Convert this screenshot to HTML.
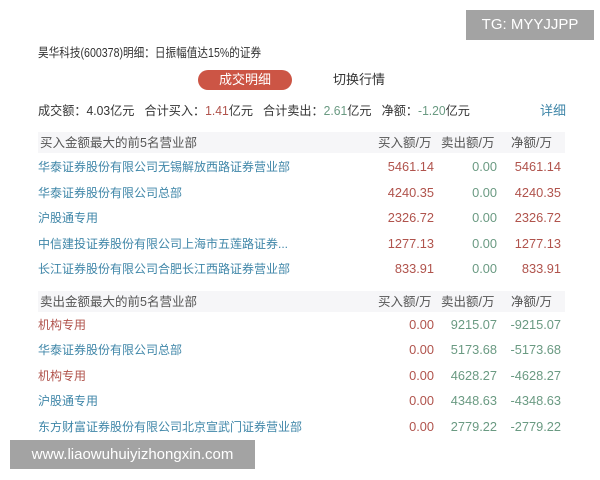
<!DOCTYPE html>
<html><head><meta charset="utf-8"><style>
*{margin:0;padding:0;box-sizing:border-box}
body{width:600px;height:480px;background:#fff;position:relative;overflow:hidden;font-family:"Liberation Sans","Noto Sans CJK SC",sans-serif;color:#333}
.a{position:absolute;white-space:nowrap;line-height:16px}
.r{color:#b0534c}.g{color:#6a9a82}.b{color:#3f86a8}
.hd{position:absolute;left:38px;width:527px;height:21px;background:#f6f6f8}
.n{position:absolute;text-align:right;white-space:nowrap;font-size:12.8px;line-height:16px}
.nm{font-size:12px;letter-spacing:0}
</style></head><body>
<div class="a" style="left:466px;top:10px;width:128px;height:30px;background:#a3a3a3;color:#fff;font-size:15px;line-height:30px;text-align:center">TG: MYYJJPP</div>
<div class="a" style="left:38px;top:45px;font-size:12.5px;transform:scaleX(0.85);transform-origin:0 0">昊华科技(600378)明细：日振幅值达15%的证券</div>
<div class="a" style="left:198px;top:70px;width:94px;height:20px;border-radius:10px;background:#cc5545;color:#fff;font-size:13px;line-height:20px;text-align:center">成交明细</div>
<div class="a" style="left:333px;top:72px;font-size:13px">切换行情</div>
<div class="a" style="left:38px;top:103px;font-size:12.5px;transform:scaleX(0.97);transform-origin:0 0">成交额：4.03亿元&nbsp;&nbsp;&nbsp;合计买入：<span class="r">1.41</span>亿元&nbsp;&nbsp;&nbsp;合计卖出：<span class="g">2.61</span>亿元&nbsp;&nbsp;&nbsp;净额：<span class="g">-1.20</span>亿元</div>
<div class="a b" style="left:540px;top:103px;font-size:13px">详细</div>

<div class="hd" style="top:132px"></div>
<div class="a" style="left:40px;top:135px;font-size:12.5px;color:#555">买入金额最大的前5名营业部</div>
<div class="a" style="left:378px;top:135px;font-size:12.5px;color:#555">买入额/万</div>
<div class="a" style="left:441px;top:135px;font-size:12.5px;color:#555">卖出额/万</div>
<div class="a" style="left:511px;top:135px;font-size:12.5px;color:#555">净额/万</div>

<div class="hd" style="top:291px"></div>
<div class="a" style="left:40px;top:294px;font-size:12.5px;color:#555">卖出金额最大的前5名营业部</div>
<div class="a" style="left:378px;top:294px;font-size:12.5px;color:#555">买入额/万</div>
<div class="a" style="left:441px;top:294px;font-size:12.5px;color:#555">卖出额/万</div>
<div class="a" style="left:511px;top:294px;font-size:12.5px;color:#555">净额/万</div>

<div class="a b nm" style="left:38px;top:159px">华泰证券股份有限公司无锡解放西路证券营业部</div>
<div class="a b nm" style="left:38px;top:185px">华泰证券股份有限公司总部</div>
<div class="a b nm" style="left:38px;top:210px">沪股通专用</div>
<div class="a b nm" style="left:38px;top:236px">中信建投证券股份有限公司上海市五莲路证券...</div>
<div class="a b nm" style="left:38px;top:261px">长江证券股份有限公司合肥长江西路证券营业部</div>

<div class="n r" style="right:166px;top:159px">5461.14</div><div class="n g" style="right:103px;top:159px">0.00</div><div class="n r" style="right:39px;top:159px">5461.14</div>
<div class="n r" style="right:166px;top:185px">4240.35</div><div class="n g" style="right:103px;top:185px">0.00</div><div class="n r" style="right:39px;top:185px">4240.35</div>
<div class="n r" style="right:166px;top:210px">2326.72</div><div class="n g" style="right:103px;top:210px">0.00</div><div class="n r" style="right:39px;top:210px">2326.72</div>
<div class="n r" style="right:166px;top:236px">1277.13</div><div class="n g" style="right:103px;top:236px">0.00</div><div class="n r" style="right:39px;top:236px">1277.13</div>
<div class="n r" style="right:166px;top:261px">833.91</div><div class="n g" style="right:103px;top:261px">0.00</div><div class="n r" style="right:39px;top:261px">833.91</div>

<div class="a r nm" style="left:38px;top:317px">机构专用</div>
<div class="a b nm" style="left:38px;top:342px">华泰证券股份有限公司总部</div>
<div class="a r nm" style="left:38px;top:368px">机构专用</div>
<div class="a b nm" style="left:38px;top:393px">沪股通专用</div>
<div class="a b nm" style="left:38px;top:419px">东方财富证券股份有限公司北京宣武门证券营业部</div>

<div class="n r" style="right:166px;top:317px">0.00</div><div class="n g" style="right:103px;top:317px">9215.07</div><div class="n g" style="right:39px;top:317px">-9215.07</div>
<div class="n r" style="right:166px;top:342px">0.00</div><div class="n g" style="right:103px;top:342px">5173.68</div><div class="n g" style="right:39px;top:342px">-5173.68</div>
<div class="n r" style="right:166px;top:368px">0.00</div><div class="n g" style="right:103px;top:368px">4628.27</div><div class="n g" style="right:39px;top:368px">-4628.27</div>
<div class="n r" style="right:166px;top:393px">0.00</div><div class="n g" style="right:103px;top:393px">4348.63</div><div class="n g" style="right:39px;top:393px">-4348.63</div>
<div class="n r" style="right:166px;top:419px">0.00</div><div class="n g" style="right:103px;top:419px">2779.22</div><div class="n g" style="right:39px;top:419px">-2779.22</div>

<div class="a" style="left:10px;top:440px;width:245px;height:29px;background:#a3a3a3;color:#fff;font-size:15px;line-height:29px;text-align:center">www.liaowuhuiyizhongxin.com</div>
</body></html>
